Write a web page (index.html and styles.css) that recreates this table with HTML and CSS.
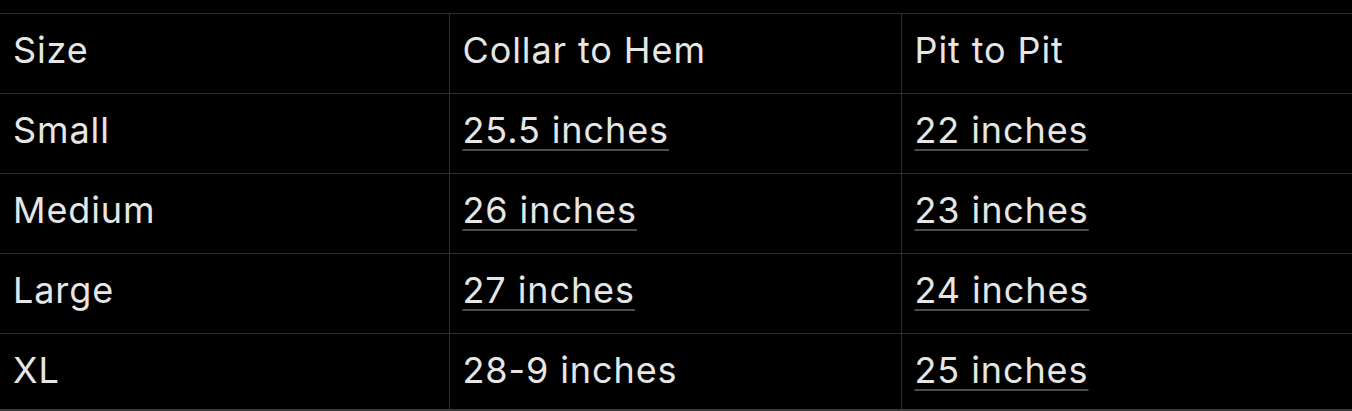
FILE: index.html
```html
<!DOCTYPE html>
<html>
<head>
<meta charset="utf-8">
<link rel="stylesheet" href="styles.css">
</head>
<body>
<table class="size-table">
  <colgroup>
    <col class="c1"><col class="c2"><col class="c3">
  </colgroup>
  <tbody>
    <tr><td>Size</td><td>Collar to Hem</td><td>Pit to Pit</td></tr>
    <tr><td>Small</td><td><a class="val">25.5 inches</a></td><td><a class="val">22 inches</a></td></tr>
    <tr><td>Medium</td><td><a class="val">26 inches</a></td><td><a class="val">23 inches</a></td></tr>
    <tr><td>Large</td><td><a class="val">27 inches</a></td><td><a class="val">24 inches</a></td></tr>
    <tr class="last"><td>XL</td><td>28-9 inches</td><td><a class="val">25 inches</a></td></tr>
  </tbody>
</table>
</body>
</html>
```
FILE: styles.css
```css
html, body {
  margin: 0;
  background: #000;
  height: 100%;
  overflow: hidden;
}
body {
  padding-top: 13px;
  font-family: Inter, "Noto Sans", sans-serif;
  color: #e6e6e6;
}
.size-table {
  width: 1352px;
  border-collapse: collapse;
  table-layout: fixed;
}
.c1 { width: 449px; }
.c2 { width: 452px; }
.c3 { width: 451px; }
.size-table td {
  height: 80px;
  box-sizing: border-box;
  padding: 18px 0 0 13px;
  border: 1px solid #2e2e2e;
  border-left: none;
  border-right: none;
  font-size: 36px;
  line-height: 36px;
  letter-spacing: 0.9px;
  vertical-align: top;
}
.size-table td + td {
  border-left: 1px solid #2e2e2e;
}
.size-table tr.last td {
  height: 76px;
  border-bottom: 2px solid #3a3a3a;
}
.val {
  color: #e6e6e6;
  text-decoration: underline;
  text-decoration-color: #4e4e4e;
  text-decoration-thickness: 2px;
  text-underline-offset: 6px;
}
```
